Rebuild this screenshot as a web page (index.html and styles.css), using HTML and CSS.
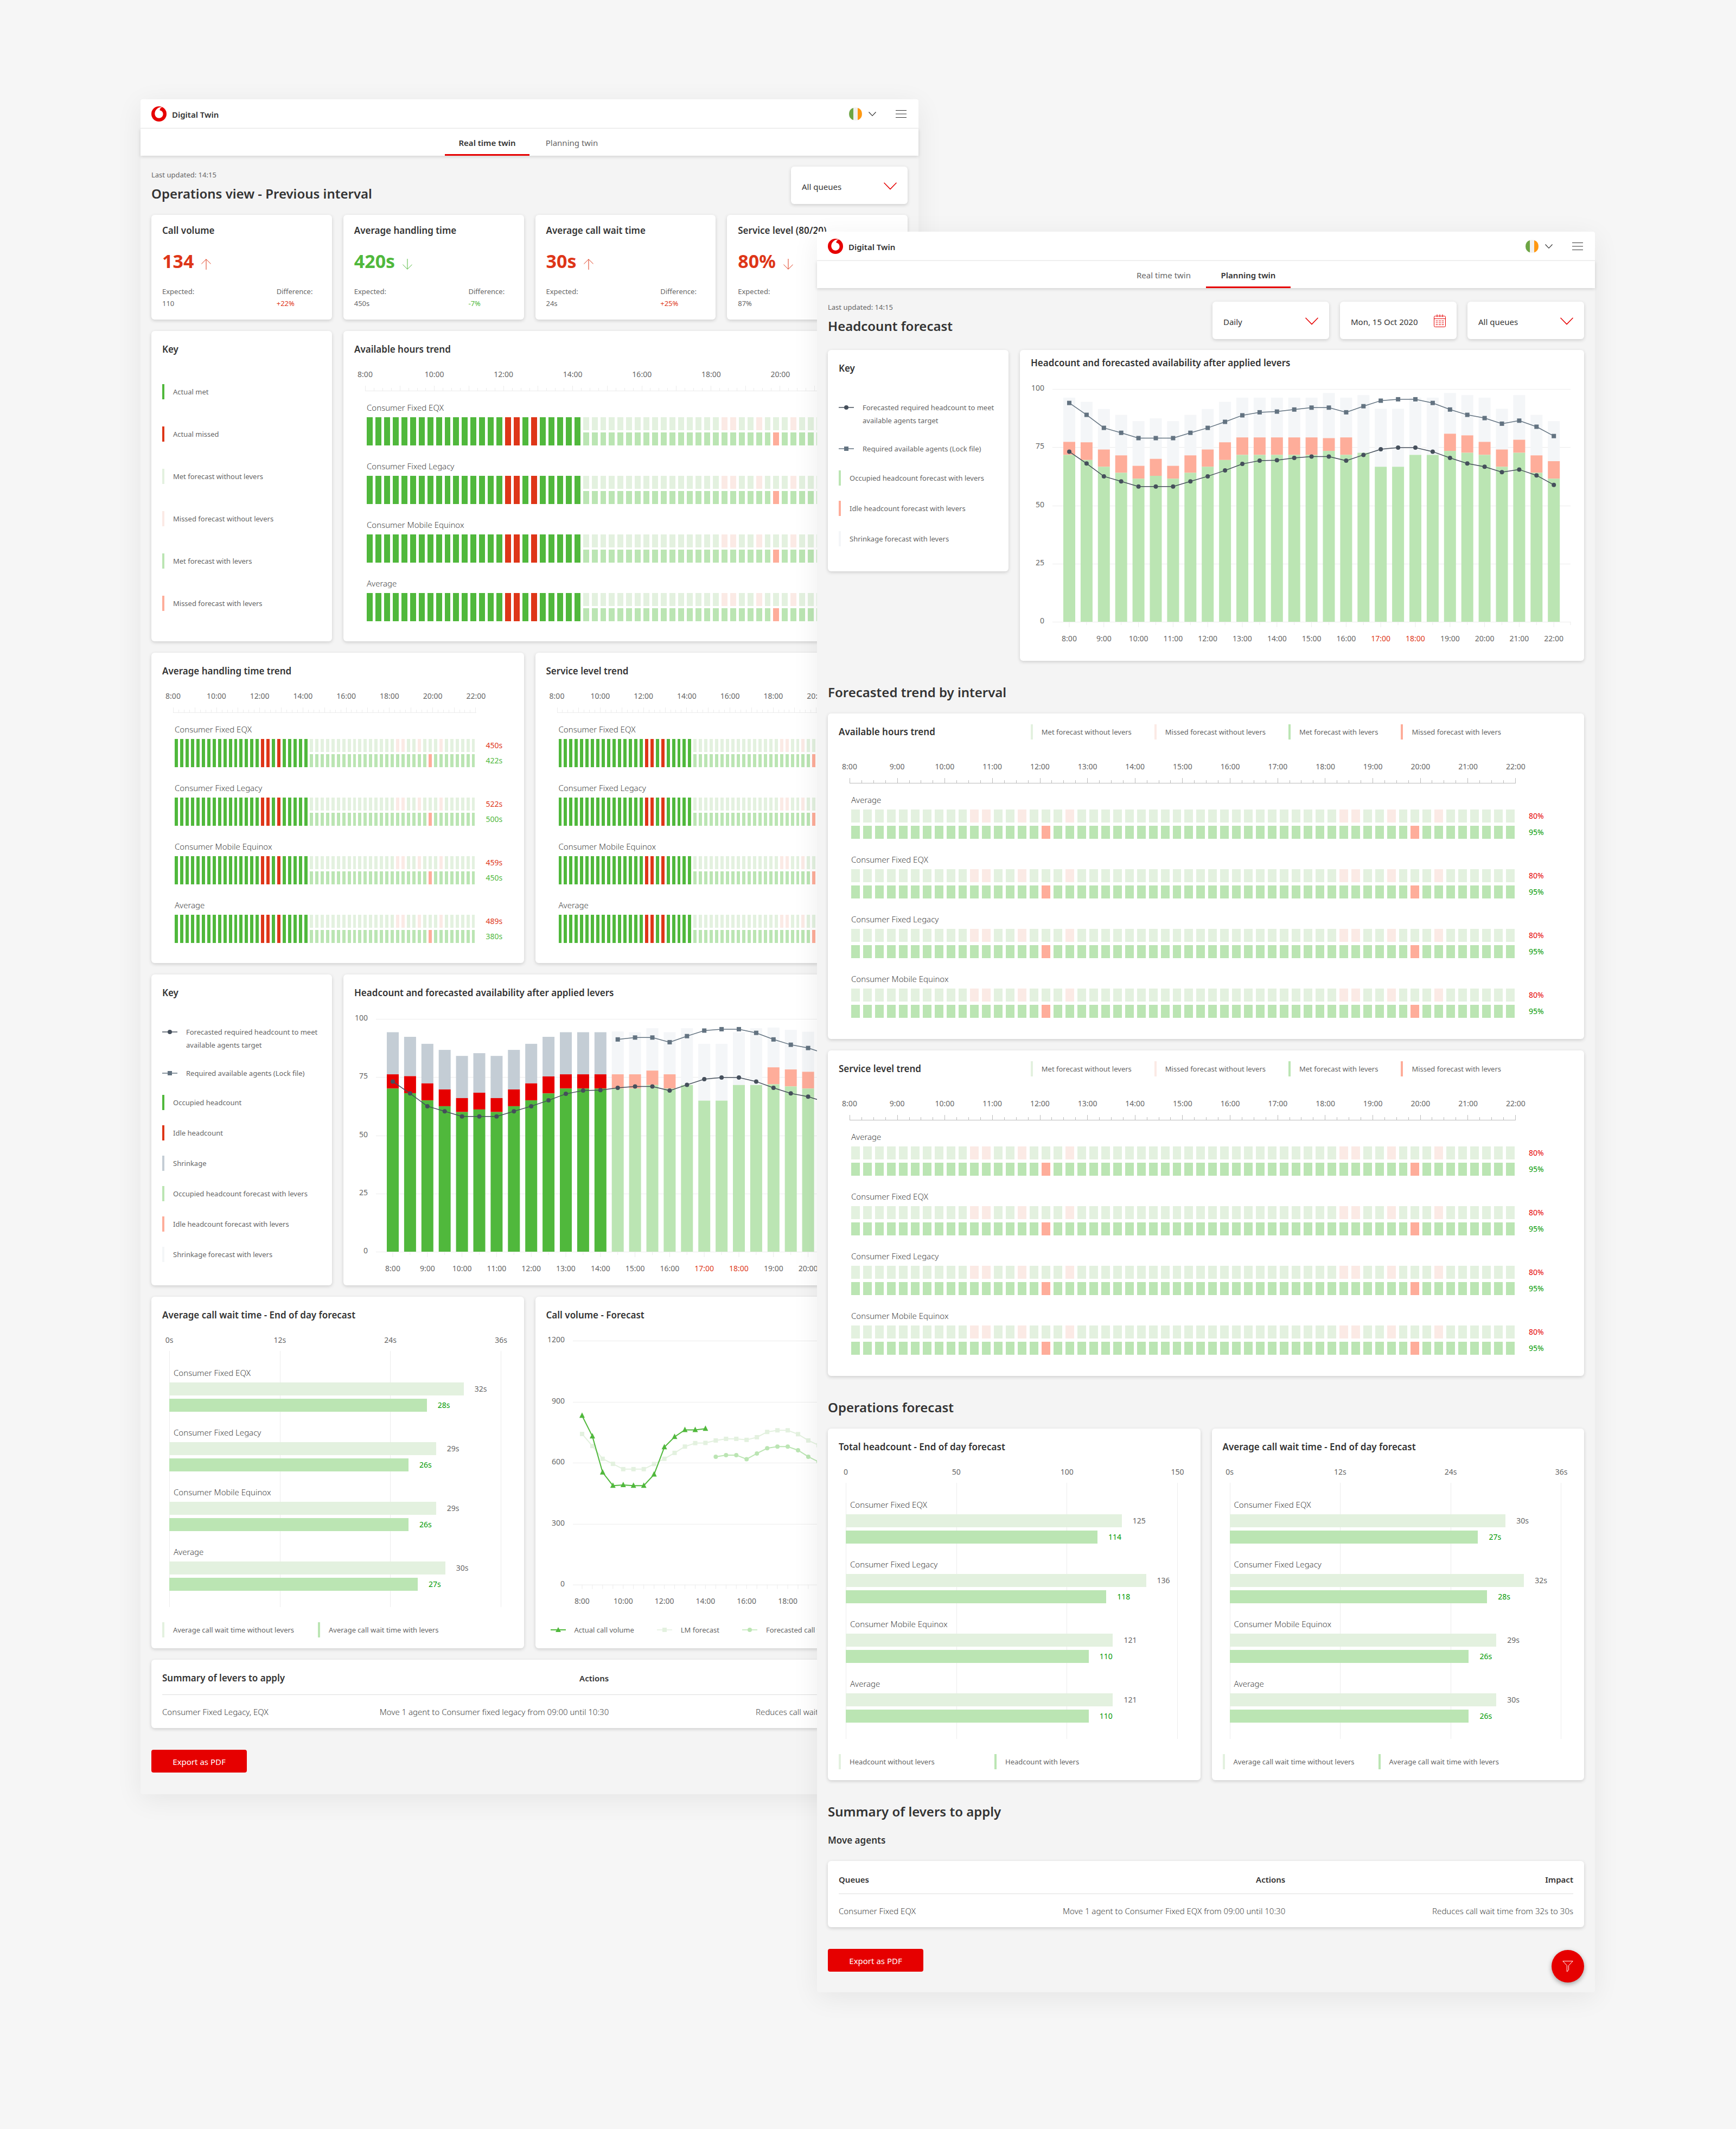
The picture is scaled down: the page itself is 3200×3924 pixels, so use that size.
FILE: index.html
```html
<!DOCTYPE html>
<html lang="en">

<head>
    <meta charset="UTF-8">
    <meta name="viewport" content="width=device-width, initial-scale=1.0">
    <title>Digital Twin</title>
    <link rel="stylesheet" href="styles.css">
</head>

<body>
    <!-- shared icons -->
    <svg class="sprite" aria-hidden="true">
        <symbol id="logo" viewBox="0 0 24 24">
            <path fill="#e60000" d="M12 0A12 12 0 0 0 0 12 12 12 0 0 0 12 24 12 12 0 0 0 24 12 12 12 0 0 0 12 0M16.25 1.12C16.57 1.12 16.9 1.15 17.11 1.22C14.94 1.67 13.21 3.69 13.22 6C13.22 6.05 13.22 6.11 13.23 6.17C16.87 7.06 18.5 9.25 18.5 12.28C18.54 15.31 16.14 18.64 12.09 18.65C8.82 18.66 5.41 15.86 5.39 11.37C5.38 8.4 7 5.54 9.04 3.85C11.04 2.19 13.77 1.13 16.25 1.12Z" />
        </symbol>
        <symbol id="flag" viewBox="0 0 24 24">
            <circle cx="12" cy="12" r="12" fill="#f0f0f0" />
            <path fill="#6da544" d="M8 .7A12 12 0 0 0 8 23.3Z" />
            <path fill="#ff9811" d="M16 .7A12 12 0 0 1 16 23.3Z" />
        </symbol>
        <symbol id="chevron" viewBox="0 0 24 14">
            <path fill="none" stroke="currentColor" stroke-width="1.5" d="M.5.8 12 12.6 23.5.8" />
        </symbol>
        <symbol id="caret" viewBox="0 0 14 8">
            <path fill="none" stroke="currentColor" stroke-width="1.2" d="M.5.5 7 7.300 13.500.5" />
        </symbol>
        <symbol id="burger" viewBox="0 0 20 14">
            <path fill="none" stroke="#333" d="M0 .5h20M0 7h20M0 13.5h20" />
        </symbol>
        <symbol id="up" viewBox="0 0 18 20">
            <path fill="none" stroke="currentColor" d="M9 20V.8M.4 9.4 9 .8l8.600 8.600" />
        </symbol>
        <symbol id="down" viewBox="0 0 18 20">
            <path fill="none" stroke="currentColor" d="M9 0v19.200M.4 10.600 9 19.200l8.600-8.600" />
        </symbol>
        <symbol id="calendar" viewBox="0 0 22 24">
            <path fill="none" stroke="currentColor" d="M2.500 3.500h17a2 2 0 0 1 2 2v16a2 2 0 0 1-2 2h-17a2 2 0 0 1-2-2v-16a2 2 0 0 1 2-2zM.5 8.500h21M6 .5v5M11 .5v5M16 .5v5" />
            <path fill="none" stroke="currentColor" d="M3.500 12.500h4m1.500 0h4m1.500 0h4M3.500 16h4m1.500 0h4m1.500 0h4M3.500 19.500h4m1.500 0h4m1.500 0h4" />
        </symbol>
        <symbol id="filter" viewBox="0 0 20 21">
            <path fill="none" stroke="#fff" d="M.8.6h18.400L11.600 8.700v8.300l-3.200 3V8.700z" />
        </symbol>
        <symbol id="line-dot" viewBox="0 0 28 12">
            <path stroke="currentColor" stroke-width="1.500" d="M0 6h28" />
            <circle cx="14" cy="6" r="4" fill="currentColor" />
        </symbol>
        <symbol id="line-square" viewBox="0 0 28 12">
            <path stroke="currentColor" stroke-width="1.500" d="M0 6h28" />
            <path fill="currentColor" d="M10 2h8v8h-8z" />
        </symbol>
        <symbol id="line-triangle" viewBox="0 0 28 12">
            <path stroke="currentColor" stroke-width="2" d="M0 6h28" />
            <path fill="currentColor" d="M14 1l5 9H9z" />
        </symbol>
    </svg>

    <main class="board">
        <article class="window live">
            <header class="topbar">
                <svg class="logo"><use href="#logo" /></svg>
                <strong class="brand">Digital Twin</strong>
                <button class="lang" type="button" aria-label="Country">
                    <svg class="flag"><use href="#flag" /></svg>
                    <svg class="caret"><use href="#caret" /></svg>
                </button>
                <button class="menu" type="button" aria-label="Menu">
                    <svg class="burger"><use href="#burger" /></svg>
                </button>
            </header>
            <nav class="tabs">
                <a class="active" href="#live">Real time twin</a>
                <a href="#planning">Planning twin</a>
            </nav>
            <div class="content" id="live">
                <div class="toolbar">
                    <div class="heading">
                        <p class="updated">Last updated: 14:15</p>
                        <h1>Operations view - Previous interval</h1>
                    </div>
                    <div class="controls">
                        <label class="field">
                            <select aria-label="Queue"><option>All queues</option></select>
                            <svg class="chevron"><use href="#chevron" /></svg>
                        </label>
                    </div>
                </div>

                <div class="stack">
                    <div class="quarters">
                        <section class="card kpi bad">
                            <h3>Call volume</h3>
                            <p class="value">134 <svg><use href="#up" /></svg></p>
                            <dl>
                                <div><dt>Expected:</dt><dd>110</dd></div>
                                <div><dt>Difference:</dt><dd class="diff">+22%</dd></div>
                            </dl>
                        </section>
                        <section class="card kpi good">
                            <h3>Average handling time</h3>
                            <p class="value">420s <svg><use href="#down" /></svg></p>
                            <dl>
                                <div><dt>Expected:</dt><dd>450s</dd></div>
                                <div><dt>Difference:</dt><dd class="diff">-7%</dd></div>
                            </dl>
                        </section>
                        <section class="card kpi bad">
                            <h3>Average call wait time</h3>
                            <p class="value">30s <svg><use href="#up" /></svg></p>
                            <dl>
                                <div><dt>Expected:</dt><dd>24s</dd></div>
                                <div><dt>Difference:</dt><dd class="diff">+25%</dd></div>
                            </dl>
                        </section>
                        <section class="card kpi bad">
                            <h3>Service level (80/20)</h3>
                            <p class="value">80% <svg><use href="#down" /></svg></p>
                            <dl>
                                <div><dt>Expected:</dt><dd>87%</dd></div>
                                <div><dt>Difference:</dt><dd class="diff">-7%</dd></div>
                            </dl>
                        </section>
                    </div>

                    <div class="split">
                        <section class="card">
                            <h3>Key</h3>
                            <ul class="key roomy">
                                <li class="bar met">Actual met</li>
                                <li class="bar missed">Actual missed</li>
                                <li class="bar met-base">Met forecast without levers</li>
                                <li class="bar missed-base">Missed forecast without levers</li>
                                <li class="bar met-lever">Met forecast with levers</li>
                                <li class="bar missed-lever">Missed forecast with levers</li>
                            </ul>
                        </section>
                        <section class="card trend wide">
                            <h3>Available hours trend</h3>
                            <div data-trend="live" data-values="80% 95%,80% 95%,80% 95%,80% 95%"></div>
                        </section>
                    </div>

                    <div class="halves">
                        <section class="card trend">
                            <h3>Average handling time trend</h3>
                            <div data-trend="live" data-values="450s 422s,522s 500s,459s 450s,489s 380s"></div>
                        </section>
                        <section class="card trend">
                            <h3>Service level trend</h3>
                            <div data-trend="live" data-values="80% 95%,80% 95%,80% 95%,80% 95%"></div>
                        </section>
                    </div>

                    <div class="split">
                        <section class="card">
                            <h3>Key</h3>
                            <ul class="key">
                                <li class="line required"><svg><use href="#line-dot" /></svg>Forecasted required headcount to meet available agents target</li>
                                <li class="line lock"><svg><use href="#line-square" /></svg>Required available agents (Lock file)</li>
                                <li class="bar met">Occupied headcount</li>
                                <li class="bar missed">Idle headcount</li>
                                <li class="bar shrinkage">Shrinkage</li>
                                <li class="bar met-lever">Occupied headcount forecast with levers</li>
                                <li class="bar missed-lever">Idle headcount forecast with levers</li>
                                <li class="bar shrinkage-lever">Shrinkage forecast with levers</li>
                            </ul>
                        </section>
                        <section class="card">
                            <h3>Headcount and forecasted availability after applied levers</h3>
                            <div class="plot" data-headcount="live"></div>
                        </section>
                    </div>

                    <div class="halves">
                        <section class="card">
                            <h3>Average call wait time - End of day forecast</h3>
                            <div data-bars="wait-live"></div>
                            <ul class="legend columns">
                                <li class="bar met-base">Average call wait time without levers</li>
                                <li class="bar met-lever">Average call wait time with levers</li>
                            </ul>
                        </section>
                        <section class="card">
                            <h3>Call volume - Forecast</h3>
                            <div class="plot" data-volume></div>
                            <ul class="legend lines">
                                <li class="line actual"><svg><use href="#line-triangle" /></svg>Actual call volume</li>
                                <li class="line lm"><svg><use href="#line-square" /></svg>LM forecast</li>
                                <li class="line forecast"><svg><use href="#line-dot" /></svg>Forecasted call volume</li>
                            </ul>
                        </section>
                    </div>

                    <section class="card summary">
                        <table>
                            <thead>
                                <tr><th class="title">Summary of levers to apply</th><th>Actions</th><th>Impact</th></tr>
                            </thead>
                            <tbody>
                                <tr>
                                    <td>Consumer Fixed Legacy, EQX</td>
                                    <td>Move 1 agent to Consumer fixed legacy from 09:00 until 10:30</td>
                                    <td>Reduces call wait time from 32s to 30s</td>
                                </tr>
                            </tbody>
                        </table>
                    </section>
                </div>

                <button class="export" type="button">Export as PDF</button>
            </div>
        </article>

        <article class="window planning">
            <header class="topbar">
                <svg class="logo"><use href="#logo" /></svg>
                <strong class="brand">Digital Twin</strong>
                <button class="lang" type="button" aria-label="Country">
                    <svg class="flag"><use href="#flag" /></svg>
                    <svg class="caret"><use href="#caret" /></svg>
                </button>
                <button class="menu" type="button" aria-label="Menu">
                    <svg class="burger"><use href="#burger" /></svg>
                </button>
            </header>
            <nav class="tabs">
                <a href="#live">Real time twin</a>
                <a class="active" href="#planning">Planning twin</a>
            </nav>
            <div class="content" id="planning">
                <div class="toolbar">
                    <div class="heading">
                        <p class="updated">Last updated: 14:15</p>
                        <h1>Headcount forecast</h1>
                    </div>
                    <div class="controls">
                        <label class="field">
                            <select aria-label="Period"><option>Daily</option></select>
                            <svg class="chevron"><use href="#chevron" /></svg>
                        </label>
                        <label class="field">
                            <input type="text" aria-label="Date" value="Mon, 15 Oct 2020">
                            <svg class="calendar"><use href="#calendar" /></svg>
                        </label>
                        <label class="field">
                            <select aria-label="Queue"><option>All queues</option></select>
                            <svg class="chevron"><use href="#chevron" /></svg>
                        </label>
                    </div>
                </div>

                <div class="split">
                    <section class="card">
                        <h3>Key</h3>
                        <ul class="key">
                            <li class="line required"><svg><use href="#line-dot" /></svg>Forecasted required headcount to meet available agents target</li>
                            <li class="line lock"><svg><use href="#line-square" /></svg>Required available agents (Lock file)</li>
                            <li class="bar met-lever">Occupied headcount forecast with levers</li>
                            <li class="bar missed-lever">Idle headcount forecast with levers</li>
                            <li class="bar shrinkage-lever">Shrinkage forecast with levers</li>
                        </ul>
                    </section>
                    <section class="card raised">
                        <h3>Headcount and forecasted availability after applied levers</h3>
                        <div class="plot" data-headcount="planning"></div>
                    </section>
                </div>

                <h2>Forecasted trend by interval</h2>
                <div class="stack">
                    <section class="card trend full">
                        <div class="trend-head">
                            <h3>Available hours trend</h3>
                            <ul class="legend">
                                <li class="bar met-base">Met forecast without levers</li>
                                <li class="bar missed-base">Missed forecast without levers</li>
                                <li class="bar met-lever">Met forecast with levers</li>
                                <li class="bar missed-lever">Missed forecast with levers</li>
                            </ul>
                        </div>
                        <div data-trend="planning" data-values="80% 95%,80% 95%,80% 95%,80% 95%"></div>
                    </section>
                    <section class="card trend full">
                        <div class="trend-head">
                            <h3>Service level trend</h3>
                            <ul class="legend">
                                <li class="bar met-base">Met forecast without levers</li>
                                <li class="bar missed-base">Missed forecast without levers</li>
                                <li class="bar met-lever">Met forecast with levers</li>
                                <li class="bar missed-lever">Missed forecast with levers</li>
                            </ul>
                        </div>
                        <div data-trend="planning" data-values="80% 95%,80% 95%,80% 95%,80% 95%"></div>
                    </section>
                </div>

                <h2>Operations forecast</h2>
                <div class="halves">
                    <section class="card">
                        <h3>Total headcount - End of day forecast</h3>
                        <div data-bars="headcount"></div>
                        <ul class="legend columns">
                            <li class="bar met-base">Headcount without levers</li>
                            <li class="bar met-lever">Headcount with levers</li>
                        </ul>
                    </section>
                    <section class="card">
                        <h3>Average call wait time - End of day forecast</h3>
                        <div data-bars="wait"></div>
                        <ul class="legend columns">
                            <li class="bar met-base">Average call wait time without levers</li>
                            <li class="bar met-lever">Average call wait time with levers</li>
                        </ul>
                    </section>
                </div>

                <h2>Summary of levers to apply</h2>
                <h3 class="subtitle">Move agents</h3>
                <section class="card summary">
                    <table>
                        <thead>
                            <tr><th>Queues</th><th>Actions</th><th>Impact</th></tr>
                        </thead>
                        <tbody>
                            <tr>
                                <td>Consumer Fixed EQX</td>
                                <td>Move 1 agent to Consumer Fixed EQX from 09:00 until 10:30</td>
                                <td>Reduces call wait time from 32s to 30s</td>
                            </tr>
                        </tbody>
                    </table>
                </section>

                <button class="export" type="button">Export as PDF</button>
            </div>
            <button class="fab" type="button" aria-label="Filter"><svg><use href="#filter" /></svg></button>
        </article>
    </main>

    <script src="charts.js"></script>
</body>

</html>
```

FILE: styles.css
```css
:root {
    --met: #50b83c;
    --missed: #de3618;
    --met-base: #e3f1df;
    --missed-base: #fbeae5;
    --met-lever: #bbe5b3;
    --missed-lever: #fead9a;
    --shrinkage: #c4cdd5;
    --shrinkage-lever: #f4f6f8;
    --required: #454f5b;
    --lock: #637381;
    --red: #e60000;
    --text: #333;
    --muted: #666;
}

* {
    box-sizing: border-box;
    margin: 0;
    padding: 0;
}

body {
    background: #f6f6f6;
    color: var(--muted);
    font-family: "Noto Sans", "Open Sans", sans-serif;
    font-size: 15px;
    line-height: 24px;
}

button,
select,
input {
    border: 0;
    background: none;
    font: inherit;
    color: inherit;
    appearance: none;
    outline: 0;
}

ul {
    list-style: none;
}

svg {
    display: block;
}

.sprite {
    display: none;
}

/* two overlapping windows */
.board {
    display: grid;
    grid-template-columns: 1247fr 187fr 1247fr;
    align-items: start;
    padding: 183px 260px 252px 259px;
}

.window {
    position: relative;
    grid-row: 1;
    background: #f4f4f4;
    border-radius: 4px;
    box-shadow: 0 10px 50px rgba(0, 0, 0, .07);
}

.live {
    grid-column: 1 / 3;
}

.planning {
    grid-column: 2 / 4;
    margin-top: 244px;
}

/* header */
.topbar {
    display: flex;
    align-items: center;
    height: 54px;
    padding: 0 22px 0 20px;
    background: #fff;
    border-bottom: 1px solid #ebebeb;
    border-radius: 4px 4px 0 0;
}

.logo {
    width: 28px;
    height: 28px;
}

.brand {
    padding-top: 2px;
    margin-left: 10px;
    font-weight: 600;
    color: var(--text);
}

.lang {
    display: flex;
    align-items: center;
    gap: 12px;
    margin-left: auto;
    color: var(--text);
}

.flag {
    width: 24px;
    height: 24px;
}

.caret {
    width: 14px;
    height: 8px;
}

.menu {
    margin-left: 36px;
}

.burger {
    width: 20px;
    height: 14px;
}

.tabs {
    display: flex;
    justify-content: center;
    height: 50px;
    background: #fff;
    box-shadow: 0 2px 6px rgba(0, 0, 0, .14);
}

.tabs a {
    width: 156px;
    padding-top: 14px;
    text-align: center;
    text-decoration: none;
    color: var(--muted);
    border-bottom: 3px solid transparent;
}

.tabs .active {
    font-weight: 600;
    color: var(--text);
    border-color: var(--red);
}

/* page */
.content {
    padding: 20px 20px 40px;
}

.planning .content {
    padding-bottom: 38px;
}

.toolbar {
    display: flex;
    justify-content: space-between;
    align-items: flex-start;
    margin-bottom: 20px;
}

.heading {
    padding-top: 5px;
}

.updated {
    margin-bottom: 9px;
    font-size: 13px;
    line-height: 20px;
}

h1,
h2 {
    font-size: 24px;
    line-height: 32px;
    font-weight: 600;
    color: var(--text);
}

h2 {
    margin: 42px 0 23px;
}

h3 {
    font-size: 17px;
    line-height: 24px;
    font-weight: 600;
    color: var(--text);
}

.subtitle {
    margin: 25px 0 26px;
}

.controls {
    display: flex;
    gap: 20px;
}

.planning .controls {
    margin-top: 5px;
}

.field {
    display: flex;
    align-items: center;
    width: 215px;
    height: 69px;
    padding: 4px 20px 0;
    background: #fff;
    border-radius: 6px;
    box-shadow: 0 2px 6px rgba(0, 0, 0, .16);
    color: var(--text);
}

.field select,
.field input {
    flex: 1;
    min-width: 0;
}

.chevron {
    width: 24px;
    height: 14px;
    margin-bottom: 2px;
    color: var(--red);
}

.calendar {
    width: 22px;
    height: 24px;
    margin-bottom: 4px;
    color: var(--red);
}

.stack {
    display: flex;
    flex-direction: column;
    gap: 21px;
}

.quarters,
.halves,
.split {
    display: grid;
    gap: 21px;
    grid-template-columns: 1fr 1fr;
}

.quarters {
    grid-template-columns: repeat(4, 1fr);
}

.split {
    grid-template-columns: 333fr 1040fr;
}

.planning .split {
    align-items: start;
}

.card {
    padding: 22px 20px 20px;
    background: #fff;
    border-radius: 6px;
    box-shadow: 0 2px 6px rgba(0, 0, 0, .16);
}

.raised {
    padding: 12px 20px 30px;
}

/* kpi */
.kpi {
    padding: 17px 20px 19px;
}

.kpi .value {
    display: flex;
    align-items: flex-end;
    gap: 14px;
    margin: 24px 0 25px;
    font-size: 34px;
    line-height: 40px;
    font-weight: 700;
}

.value svg {
    width: 18px;
    height: 20px;
    margin-bottom: 4px;
}

.kpi dl {
    display: grid;
    grid-template-columns: 1fr 82px;
    font-size: 13px;
    line-height: 22px;
}

.bad .value,
.bad .diff {
    color: var(--missed);
}

.good .value,
.good .diff {
    color: var(--met);
}

/* key and legends */
.key {
    display: flex;
    flex-direction: column;
    gap: 28px;
    margin-top: 48px;
    padding-bottom: 23px;
    font-size: 13px;
}

.planning .key {
    padding-bottom: 26px;
}

.roomy {
    gap: 50px;
    margin-top: 52px;
}

.bar {
    height: 28px;
    padding-left: 16px;
    border-left: 4px solid;
    line-height: 28px;
    white-space: nowrap;
}

.bar.met { border-color: var(--met); }
.bar.missed { border-color: var(--missed); }
.bar.met-base { border-color: var(--met-base); }
.bar.missed-base { border-color: var(--missed-base); }
.bar.met-lever { border-color: var(--met-lever); }
.bar.missed-lever { border-color: var(--missed-lever); }
.bar.shrinkage { border-color: var(--shrinkage); }
.bar.shrinkage-lever { border-color: var(--shrinkage-lever); }

.line {
    display: flex;
    gap: 16px;
}

.line svg {
    flex: none;
    width: 28px;
    height: 12px;
    margin-top: 6px;
}

.required svg { color: var(--required); }
.lock svg { color: var(--lock); }
.actual svg { color: var(--met); }
.lm svg { color: var(--met-base); }
.forecast svg { color: var(--met-lever); }

.legend {
    display: flex;
    gap: 42px;
    font-size: 13px;
}

.columns {
    display: grid;
    grid-template-columns: 287px 1fr;
    gap: 0;
    margin-top: 28px;
}

.lines {
    padding: 2px 8px;
    white-space: nowrap;
}

/* axis labels sit centred on evenly spaced points */
.axis {
    display: flex;
    justify-content: space-between;
    font-size: 14px;
    line-height: 20px;
}

.axis span {
    display: flex;
    justify-content: center;
    width: 0;
}

/* trends */
.trend {
    --tail: 68px;
    --cell-gap: 4px;
    --row-gap: 4px;
    --tick: #ececec;
    padding-bottom: 37px;
}

.wide {
    --tail: 87px;
    --cell-gap: 5px;
}

.full {
    --tail: 106px;
    --cell-gap: 6px;
    --row-gap: 6px;
    --tick: #bbb;
    padding-bottom: 39px;
}

.trend .axis,
.ticks {
    margin: 24px var(--tail) 0 20px;
}

.ticks {
    display: flex;
    justify-content: space-between;
    align-items: flex-end;
    height: 10px;
    margin-top: 11px;
    border-bottom: 1px solid var(--tick);
}

.ticks i {
    width: 1px;
    height: 5px;
    background: var(--tick);
}

.ticks i:nth-child(4n + 1) {
    height: 9px;
}

.queue {
    margin-top: 26px;
}

.ticks + .queue {
    margin-top: 18px;
}

.full .axis {
    margin-top: 42px;
}

.queue-name,
.eod-name {
    margin-bottom: 6px;
    padding-left: 23px;
    font-weight: 350;
    color: #444;
}

.queue-row {
    display: grid;
    grid-template-columns: 1fr var(--tail);
    padding-left: 23px;
}

.strip {
    display: grid;
    grid-auto-flow: column;
    grid-auto-columns: 1fr;
    grid-template-rows: 24px 24px;
    gap: var(--row-gap) var(--cell-gap);
    margin-right: 2px;
}

.strip i { background: var(--met-base); }
.strip i.missed-base { background: var(--missed-base); }
.strip i.met-lever { background: var(--met-lever); }
.strip i.missed-lever { background: var(--missed-lever); }

.strip i.met,
.strip i.missed {
    grid-row: span 2;
    background: var(--met);
}

.strip i.missed {
    background: var(--missed);
}

.scores {
    display: grid;
    gap: var(--row-gap);
    align-content: start;
    padding-left: 18px;
    font-size: 14px;
    color: var(--met);
}

.scores span:first-child {
    color: var(--missed);
}

.full .scores {
    padding-left: 24px;
    color: #090;
}

.full .scores span:first-child {
    color: var(--red);
}

.trend-head {
    display: flex;
    justify-content: space-between;
    height: 24px;
}

.trend-head .legend {
    margin: -2px 133px 0 0;
}

/* end of day bars */
.eod {
    margin: 24px 22px 0 13px;
}

.eod-plot {
    margin-top: 10px;
    padding: 28px 0 30px;
    border-right: 1px solid #ececec;
    background: repeating-linear-gradient(90deg, #ececec 0 1px, transparent 1px calc(100% / 3));
}

.eod-queue + .eod-queue {
    margin-top: 26px;
}

.eod-name {
    padding-left: 8px;
}

.eod-row {
    display: flex;
    gap: 20px;
    font-size: 14px;
    white-space: nowrap;
}

.eod-row + .eod-row {
    margin-top: 6px;
    color: #090;
}

.eod-row i {
    flex: none;
    height: 24px;
    background: var(--met-base);
}

.eod-row + .eod-row i {
    background: var(--met-lever);
}

/* svg plots */
.plot {
    margin: 16px -20px 0;
}

.plot svg {
    width: 100%;
    height: auto;
}

.plot text {
    font-size: 14px;
    fill: var(--muted);
}

.plot .hot {
    fill: var(--missed);
}

.plot .grid {
    stroke: #ececec;
    stroke-width: 1;
}

/* tables */
.summary {
    padding-bottom: 18px;
}

table {
    width: 100%;
    border-collapse: collapse;
    table-layout: fixed;
}

th {
    padding-bottom: 14px;
    border-bottom: 1px solid #ddd;
    font-weight: 600;
    color: var(--text);
    text-align: right;
}

th:nth-child(1) { width: 25%; }
th:nth-child(2) { width: 35.8%; }

th:first-child,
td:first-child {
    text-align: left;
}

.live th {
    padding-bottom: 18px;
}

th.title {
    font-size: 17px;
}

td {
    padding-top: 19px;
    font-weight: 350;
    color: #444;
    text-align: right;
}

.export {
    display: block;
    width: 176px;
    height: 42px;
    margin-top: 40px;
    padding-top: 2px;
    background: var(--red);
    border-radius: 4px;
    color: #fff;
}

.fab {
    position: absolute;
    right: 20px;
    bottom: 18px;
    display: flex;
    align-items: center;
    justify-content: center;
    width: 60px;
    height: 60px;
    border-radius: 50%;
    background: var(--red);
    box-shadow: 0 3px 8px rgba(0, 0, 0, .35);
}

.fab svg {
    width: 20px;
    height: 21px;
}
```

FILE: charts.js
```js
const QUEUES = ['Consumer Fixed EQX', 'Consumer Fixed Legacy', 'Consumer Mobile Equinox', 'Average'];
const SLOTS = 56; // quarter hours, 8:00 - 22:00

const range = n => Array.from({ length: n }, (_, i) => i);

function hours(step) {
    const out = [];
    for (let h = 8; h <= 22; h += step) out.push(h + ':00');
    return out;
}

function axis(labels) {
    return '<div class="axis">' + labels.map(l => `<span>${l}</span>`).join('') + '</div>';
}

/* trend strips */
function strip(live) {
    const missed = [16, 17, 19];
    const base = live ? [41, 42, 45, 49] : [10, 11, 14, 18, 41, 42, 45, 49];
    const lever = live ? [47] : [16, 47];
    return range(SLOTS).map(i => {
        if (live && i < 25) return `<i class="${missed.includes(i) ? 'missed' : 'met'}"></i>`;
        return `<i class="${base.includes(i) ? 'missed-base' : 'met-base'}"></i>` +
            `<i class="${lever.includes(i) ? 'missed-lever' : 'met-lever'}"></i>`;
    }).join('');
}

document.querySelectorAll('[data-trend]').forEach(el => {
    const live = el.dataset.trend === 'live';
    const names = live ? QUEUES : ['Average', ...QUEUES.slice(0, 3)];
    const values = el.dataset.values.split(',').map(v => v.split(' '));
    el.outerHTML = axis(hours(live ? 2 : 1)) +
        '<div class="ticks">' + '<i></i>'.repeat(SLOTS + 1) + '</div>' +
        names.map((name, i) => `
            <div class="queue">
                <p class="queue-name">${name}</p>
                <div class="queue-row">
                    <div class="strip">${strip(live)}</div>
                    <div class="scores"><span>${values[i][0]}</span><span>${values[i][1]}</span></div>
                </div>
            </div>`).join('');
});

/* end of day bars: [label, size] without and with levers */
const BARS = {
    'wait-live': { max: 36, unit: 's', rows: [[32, 28], [29, 26], [29, 26], [30, 27]] },
    wait: { max: 36, unit: 's', rows: [[30, 27], [32, 28], [29, 26], [30, 26]], sizes: { 3: [29, 26] } },
    headcount: { max: 150, unit: '', rows: [[125, 114], [136, 118], [121, 110], [121, 110]] }
};

document.querySelectorAll('[data-bars]').forEach(el => {
    const { max, unit, rows, sizes = {} } = BARS[el.dataset.bars];
    el.className = 'eod';
    el.innerHTML = axis(range(4).map(i => max / 3 * i + unit)) +
        '<div class="eod-plot">' + rows.map((row, q) => `
            <div class="eod-queue">
                <p class="eod-name">${QUEUES[q]}</p>
                ${row.map((v, k) => {
                    const size = (sizes[q] || row)[k] / max * 100;
                    return `<div class="eod-row"><i style="width: ${size.toFixed(2)}%"></i>${v}${unit}</div>`;
                }).join('')}
            </div>`).join('') + '</div>';
});

/* headcount: total, idle top, occupied top (no idle = same value) */
const PLAN = [
    [96.3, 77.3, 71.7], [94.5, 77.1, 69.5], [91.4, 74, 66.6], [88.9, 71.5, 64], [86.2, 67, 61.5],
    [87.4, 70, 62.7], [86.2, 67, 61.5], [88.9, 71.5, 64], [91.4, 74, 66.6], [94.5, 77.1, 69.5],
    [96.3, 79.2, 71.7], [96.3, 79.2, 71.7], [96.3, 79.2, 71.7], [96.3, 79.2, 71.7], [96.3, 79.2, 71.7],
    [98.3, 78.9, 73.4], [96.3, 79.2, 71.7], [97.4, 72.6, 72.6], [91.5, 66.6, 66.6], [91.5, 66.6, 66.6],
    [96.3, 71.7, 71.7], [96.3, 71.7, 71.7], [98.3, 80.8, 73.4], [97.4, 80.1, 72.6], [96.3, 77.3, 71.7],
    [91.5, 74, 66.6], [97.4, 78.2, 72.6], [88.9, 71.5, 64], [86.2, 69, 61.5]
];
const LIVE = [
    [94.3, 76.2, 70.1], [92.3, 75.4, 68.1], [89.3, 72.3, 65], [86.7, 69.7, 62.5], [84.1, 66, 60],
    [85.3, 68.3, 61.1], [84.1, 66, 60], [86.7, 69.7, 62.5], [89.3, 72.3, 65], [92.3, 75.3, 68],
    [94.3, 76.2, 70.1], [94.3, 76.2, 70.1], [94.3, 76.2, 70.1], [94.6, 76.2, 70.1], [94.3, 76.2, 70.1],
    [96, 77.8, 71.6], [94.3, 76.2, 70.1], [96, 71.6, 71.6], [89.3, 64.9, 64.9], [89.3, 64.9, 64.9],
    [94.3, 71.6, 71.6], [96, 71.6, 71.6], [96.3, 79.2, 71.9], [95.3, 78.3, 71], [94.5, 77.3, 70.1],
    [89.3, 72.3, 65], [95.3, 76.5, 71], [86.7, 69.7, 62.5], [84.1, 67.2, 60]
];
const REQUIRED = [73.1, 68, 62.5, 60.3, 58.1, 58.1, 58.1, 60.3, 62.5, 65, 67.8, 69.2, 69.4, 70.4, 71,
    71, 69.2, 71.7, 74.1, 74.8, 74.8, 73.1, 70.4, 68, 66.6, 64.3, 65.4, 62.9, 58.8];
const LOCK = [94, 88.9, 83.3, 81.2, 78.9, 78.9, 78.9, 81.2, 83.3, 85.9, 88.7, 90, 90.3, 91.2, 92,
    92, 90, 92.6, 95, 95.6, 95.6, 94, 91.2, 88.9, 87.5, 85.1, 86.4, 83.8, 79.8];

function series(points, color, marker, width) {
    const shapes = {
        dot: ([x, y]) => `<circle cx="${x}" cy="${y}" r="4"/>`,
        square: ([x, y]) => `<rect x="${x - 4}" y="${y - 4}" width="8" height="8"/>`,
        triangle: ([x, y]) => `<path d="M${x} ${y - 6}l5 10h-10z"/>`
    };
    return `<g fill="${color}"><polyline fill="none" stroke="${color}" stroke-width="${width}" points="${points.map(p => p.join()).join(' ')}"/>` +
        points.map(shapes[marker]).join('') + '</g>';
}

document.querySelectorAll('[data-headcount]').forEach(el => {
    const live = el.dataset.headcount === 'live';
    const left = 60, right = 1015, top = 20, bottom = 449;
    const x = i => +(91 + i * 31.9).toFixed(1);
    const y = v => +(bottom - v / 100 * (bottom - top)).toFixed(1);
    let s = '';

    [0, 25, 50, 75, 100].forEach(v => {
        s += `<path class="grid" d="M${left} ${Math.round(y(v)) + .5}H${right}"/>`;
        s += `<text x="45" y="${Math.round(y(v)) + 3}" text-anchor="end">${v}</text>`;
    });
    (live ? LIVE : PLAN).forEach(([total, idle, occupied], i) => {
        const past = live && i < 13;
        const rect = (from, to, color) => `<rect x="${(x(i) - 11).toFixed(1)}" y="${y(to)}" width="22" height="${(y(from) - y(to)).toFixed(1)}" fill="${color}"/>`;
        s += rect(idle, total, past ? 'var(--shrinkage)' : 'var(--shrinkage-lever)');
        s += rect(occupied, idle, past ? 'var(--red)' : 'var(--missed-lever)');
        s += rect(0, occupied, past ? 'var(--met)' : 'var(--met-lever)');
        s += `<path class="grid" d="M${x(i)} ${bottom + 1}v${i % 2 ? 5 : 9}"/>`;
    });
    hours(1).forEach((h, i) => {
        const hot = h === '17:00' || h === '18:00';
        s += `<text class="${hot ? 'hot' : ''}" x="${x(i * 2)}" y="485" text-anchor="middle">${h}</text>`;
    });
    s += `<path class="grid" d="M${right} ${bottom}v6"/>`;

    const line = (values, from) => values.map((v, i) => [x(i), y(v)]).slice(from);
    s += series(line(LOCK, live ? 13 : 0), '#637381', 'square', 1.5);
    s += series(line(REQUIRED, 0), '#454f5b', 'dot', 1.5);
    el.innerHTML = `<svg viewBox="0 0 1040 491">${s}</svg>`;
});

/* call volume */
const VOLUME = {
    lm: [741, 682, 619, 594, 568, 568, 568, 593, 619, 648, 679, 696, 697, 709, 717, 717, 712, 725, 751,
        759, 759, 740, 709, 686, 670, 640, 655, 620, 580],
    forecast: [629, 637, 637, 617, 645, 671, 679, 679, 661, 629, 604, 590, 560, 575, 540, 500],
    actual: [831, 730, 552, 487, 490, 487, 487, 542, 676, 727, 761, 761, 767]
};

document.querySelectorAll('[data-volume]').forEach(el => {
    const left = 69, right = 634, top = 19, bottom = 469;
    const x = i => +(86 + i * 18.97).toFixed(1);
    const y = v => +(bottom - v / 1200 * (bottom - top)).toFixed(1);
    const line = (values, from) => values.map((v, i) => [x(i + from), y(v)]);
    let s = '';

    [0, 300, 600, 900, 1200].forEach(v => {
        s += `<path class="grid" d="M${left} ${Math.round(y(v)) + .5}H${right}"/>`;
        s += `<text x="54" y="${Math.round(y(v)) + 3}" text-anchor="end">${v}</text>`;
    });
    range(29).forEach(i => { s += `<path class="grid" d="M${x(i)} ${bottom}v8"/>`; });
    hours(2).forEach((h, i) => { s += `<text x="${x(i * 4)}" y="504" text-anchor="middle">${h}</text>`; });

    s += series(line(VOLUME.lm, 0), '#e3f1df', 'square', 2);
    s += series(line(VOLUME.forecast, 13), '#bbe5b3', 'dot', 2);
    s += series(line(VOLUME.actual, 0), '#50b83c', 'triangle', 2);
    el.innerHTML = `<svg viewBox="0 0 687 538">${s}</svg>`;
});
```
